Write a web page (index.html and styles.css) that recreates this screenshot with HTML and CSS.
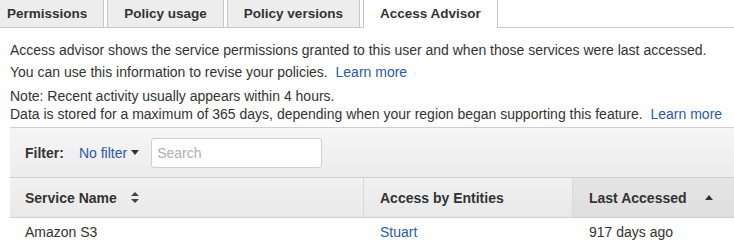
FILE: index.html
```html
<!DOCTYPE html>
<html lang="en">
<head>
    <meta charset="UTF-8">
    <title>Access Advisor</title>
    <link rel="stylesheet" href="styles.css">
</head>
<body>
    <!-- Tabs -->
    <div class="tabs">
        <div class="tab">Permissions</div>
        <div class="tab">Policy usage</div>
        <div class="tab">Policy versions</div>
        <div class="tab active">Access Advisor</div>
    </div>

    <!-- Description -->
    <div class="content">
        <p class="intro">Access advisor shows the service permissions granted to this user and when those services were last accessed.<br>You can use this information to revise your policies. &nbsp;<a href="#">Learn more</a></p>
        <p class="note">Note: Recent activity usually appears within 4 hours.</p>
        <p class="note">Data is stored for a maximum of 365 days, depending when your region began supporting this feature. &nbsp;<a href="#">Learn more</a></p>

        <!-- Table panel -->
        <div class="panel">
            <div class="filter-row">
                <span class="filter-label">Filter:</span>
                <a href="#" class="filter-drop">No filter
                    <svg width="8" height="5" viewBox="0 0 8 5"><path d="M0 0h8L4 5z" fill="#333"/></svg>
                </a>
                <input class="search" type="text" placeholder="Search">
            </div>
            <div class="grid head">
                <div class="cell">Service Name
                    <svg class="sort" width="8" height="11" viewBox="0 0 8 11"><path d="M4 0l4 4H0zM4 11L0 7h8z" fill="#444"/></svg>
                </div>
                <div class="cell divided">Access by Entities</div>
                <div class="cell divided sorted">Last Accessed
                    <svg class="sort-up" width="8" height="5" viewBox="0 0 8 5"><path d="M4 0l4 5H0z" fill="#333"/></svg>
                </div>
            </div>
            <div class="grid row">
                <div class="cell">Amazon S3</div>
                <div class="cell"><a href="#">Stuart</a></div>
                <div class="cell">917 days ago</div>
            </div>
        </div>
    </div>
</body>
</html>
```

FILE: styles.css
```css
body {
    margin: 0;
    font-family: "Liberation Sans", Arial, sans-serif;
    font-size: 14px;
    color: #333;
    background: #fff;
    overflow: hidden;
}
a {
    color: #2a5aa8;
    text-decoration: none;
}
.tabs {
    display: flex;
    gap: 3px;
    margin-left: -10px;
    height: 27px;
    border-bottom: 1px solid #c9c9c9;
}
.tab {
    padding: 0 16px;
    line-height: 27px;
    font-weight: bold;
    font-size: 13.5px;
    color: #333;
    background: #ededed;
    border: 1px solid #c9c9c9;
    border-top: none;
    border-bottom: none;
}
.tab.active {
    background: #fff;
    height: 28px;
}
.content {
    padding: 0 0 0 10px;
}
.content p {
    margin: 0;
}
.intro {
    padding-top: 11px;
    line-height: 22px;
}
.note {
    line-height: 18px;
}
.intro + .note {
    margin-top: 4px;
}
.panel {
    margin-top: 4px;
    border-top: 1px solid #cfcfcf;
}
.filter-row {
    display: flex;
    align-items: center;
    height: 49px;
    padding-left: 15px;
    background: linear-gradient(#f6f6f6, #ececec);
    border-bottom: 1px solid #cfcfcf;
}
.filter-label {
    font-weight: bold;
    margin-right: 15px;
}
.filter-drop {
    display: flex;
    align-items: center;
    gap: 4px;
    margin-right: 12px;
}
.search {
    width: 171px;
    height: 30px;
    box-sizing: border-box;
    border: 1px solid #cfcfcf;
    border-radius: 3px;
    padding: 0 5px;
    font-family: inherit;
    font-size: 14px;
    background: #fff;
}
.search::placeholder {
    color: #b0b0b0;
}
.grid {
    display: grid;
    grid-template-columns: 353px 209px 1fr;
}
.head {
    height: 39px;
    background: linear-gradient(#f1f1f1, #e9e9e9);
    border-bottom: 1px solid #cfcfcf;
    font-weight: bold;
}
.head .cell {
    display: flex;
    align-items: center;
}
.cell {
    padding-left: 15px;
}
.head .divided {
    border-left: 1px solid #d8d8d8;
    padding-left: 16px;
}
.head .sorted {
    background: linear-gradient(#e6e6e6, #dedede);
}
.sort {
    margin-left: 14px;
}
.sort-up {
    margin-left: 18px;
}
.row {
    line-height: 28px;
}
.row .cell + .cell {
    padding-left: 17px;
}
```
